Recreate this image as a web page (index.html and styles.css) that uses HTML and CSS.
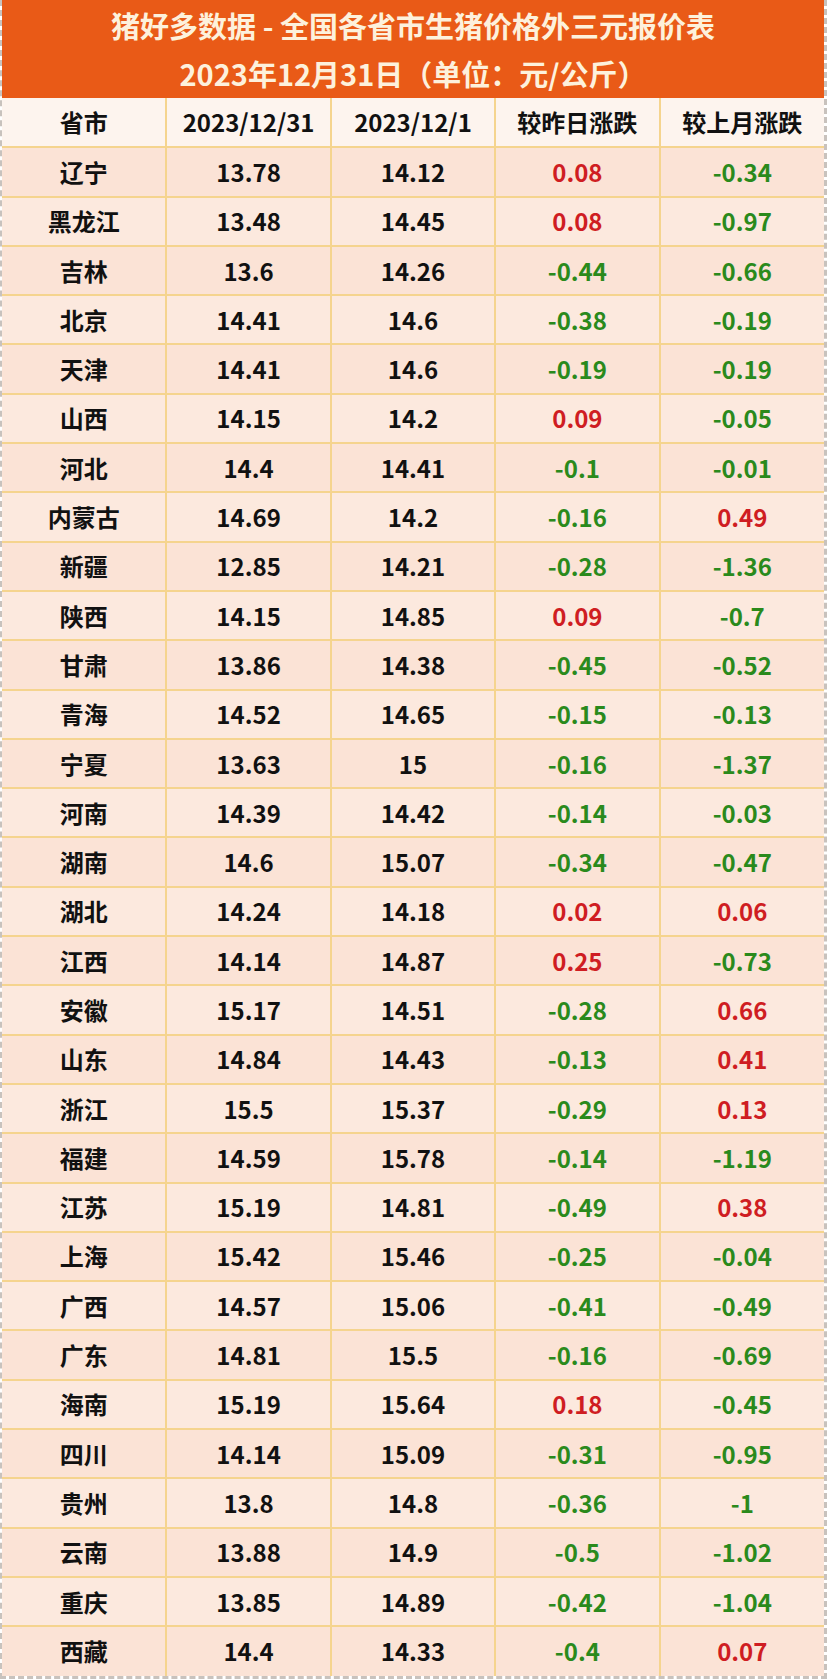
FILE: index.html
```html
<!DOCTYPE html>
<html lang="zh">
<head>
<meta charset="utf-8">
<title>猪好多数据</title>
<link rel="stylesheet" href="styles.css">
</head>
<body>
<div class="sheet">
  <div class="banner">
    <div class="title">猪好多数据 - 全国各省市生猪价格外三元报价表</div>
    <div class="title">2023年12月31日（单位：元/公斤）</div>
  </div>
  <table class="grid">
    <thead>
      <tr class="head"><th>省市</th><th>2023/12/31</th><th>2023/12/1</th><th>较昨日涨跌</th><th>较上月涨跌</th></tr>
    </thead>
    <tbody>
      <tr><td>辽宁</td><td>13.78</td><td>14.12</td><td class="up">0.08</td><td class="down">-0.34</td></tr>
      <tr><td>黑龙江</td><td>13.48</td><td>14.45</td><td class="up">0.08</td><td class="down">-0.97</td></tr>
      <tr><td>吉林</td><td>13.6</td><td>14.26</td><td class="down">-0.44</td><td class="down">-0.66</td></tr>
      <tr><td>北京</td><td>14.41</td><td>14.6</td><td class="down">-0.38</td><td class="down">-0.19</td></tr>
      <tr><td>天津</td><td>14.41</td><td>14.6</td><td class="down">-0.19</td><td class="down">-0.19</td></tr>
      <tr><td>山西</td><td>14.15</td><td>14.2</td><td class="up">0.09</td><td class="down">-0.05</td></tr>
      <tr><td>河北</td><td>14.4</td><td>14.41</td><td class="down">-0.1</td><td class="down">-0.01</td></tr>
      <tr><td>内蒙古</td><td>14.69</td><td>14.2</td><td class="down">-0.16</td><td class="up">0.49</td></tr>
      <tr><td>新疆</td><td>12.85</td><td>14.21</td><td class="down">-0.28</td><td class="down">-1.36</td></tr>
      <tr><td>陕西</td><td>14.15</td><td>14.85</td><td class="up">0.09</td><td class="down">-0.7</td></tr>
      <tr><td>甘肃</td><td>13.86</td><td>14.38</td><td class="down">-0.45</td><td class="down">-0.52</td></tr>
      <tr><td>青海</td><td>14.52</td><td>14.65</td><td class="down">-0.15</td><td class="down">-0.13</td></tr>
      <tr><td>宁夏</td><td>13.63</td><td>15</td><td class="down">-0.16</td><td class="down">-1.37</td></tr>
      <tr><td>河南</td><td>14.39</td><td>14.42</td><td class="down">-0.14</td><td class="down">-0.03</td></tr>
      <tr><td>湖南</td><td>14.6</td><td>15.07</td><td class="down">-0.34</td><td class="down">-0.47</td></tr>
      <tr><td>湖北</td><td>14.24</td><td>14.18</td><td class="up">0.02</td><td class="up">0.06</td></tr>
      <tr><td>江西</td><td>14.14</td><td>14.87</td><td class="up">0.25</td><td class="down">-0.73</td></tr>
      <tr><td>安徽</td><td>15.17</td><td>14.51</td><td class="down">-0.28</td><td class="up">0.66</td></tr>
      <tr><td>山东</td><td>14.84</td><td>14.43</td><td class="down">-0.13</td><td class="up">0.41</td></tr>
      <tr><td>浙江</td><td>15.5</td><td>15.37</td><td class="down">-0.29</td><td class="up">0.13</td></tr>
      <tr><td>福建</td><td>14.59</td><td>15.78</td><td class="down">-0.14</td><td class="down">-1.19</td></tr>
      <tr><td>江苏</td><td>15.19</td><td>14.81</td><td class="down">-0.49</td><td class="up">0.38</td></tr>
      <tr><td>上海</td><td>15.42</td><td>15.46</td><td class="down">-0.25</td><td class="down">-0.04</td></tr>
      <tr><td>广西</td><td>14.57</td><td>15.06</td><td class="down">-0.41</td><td class="down">-0.49</td></tr>
      <tr><td>广东</td><td>14.81</td><td>15.5</td><td class="down">-0.16</td><td class="down">-0.69</td></tr>
      <tr><td>海南</td><td>15.19</td><td>15.64</td><td class="up">0.18</td><td class="down">-0.45</td></tr>
      <tr><td>四川</td><td>14.14</td><td>15.09</td><td class="down">-0.31</td><td class="down">-0.95</td></tr>
      <tr><td>贵州</td><td>13.8</td><td>14.8</td><td class="down">-0.36</td><td class="down">-1</td></tr>
      <tr><td>云南</td><td>13.88</td><td>14.9</td><td class="down">-0.5</td><td class="down">-1.02</td></tr>
      <tr><td>重庆</td><td>13.85</td><td>14.89</td><td class="down">-0.42</td><td class="down">-1.04</td></tr>
      <tr><td>西藏</td><td>14.4</td><td>14.33</td><td class="down">-0.4</td><td class="up">0.07</td></tr>
    </tbody>
  </table>
</div>
</body>
</html>
```
FILE: styles.css
```css
html, body {
  margin: 0;
  padding: 0;
  background: #ffffff;
}
.sheet {
  width: 827px;
  box-sizing: border-box;
  border-left: 2px dashed #c8c2bd;
  border-right: 3px dashed #c8c2bd;
  border-bottom: 3px dashed #c8c2bd;
  font-family: "Noto Sans CJK SC", "Noto Sans", sans-serif;
  font-weight: 700;
}
.banner {
  background: #e95a17;
  height: 98px;
  display: flex;
  flex-direction: column;
  justify-content: center;
  align-items: center;
}
.title {
  color: #fdf1dc;
  font-size: 29px;
  line-height: 48px;
}
.grid {
  width: 100%;
  border-collapse: collapse;
  table-layout: fixed;
}
.grid th,
.grid td {
  height: 49.3px;
  box-sizing: border-box;
  padding: 0 0 1px 0;
  border-right: 2px solid #f5d48e;
  border-bottom: 2px solid #f5d48e;
  text-align: center;
  vertical-align: middle;
  font-size: 24px;
  font-weight: 700;
  color: #111111;
}
.grid th:last-child,
.grid td:last-child {
  border-right: none;
}
.grid tbody tr:last-child td {
  border-bottom: none;
}
.head th {
  background: #fdf4ee;
}
.grid tbody tr:nth-child(odd) td {
  background: #fbe3d6;
}
.grid tbody tr:nth-child(even) td {
  background: #fce9de;
}
.grid td.up {
  color: #cf1d22;
}
.grid td.down {
  color: #2a8a1c;
}
```
